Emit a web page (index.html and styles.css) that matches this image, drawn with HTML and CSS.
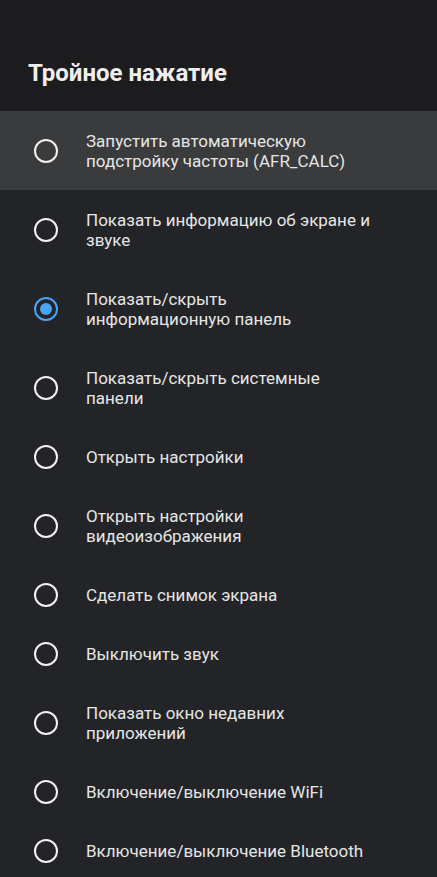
FILE: index.html
```html
<!DOCTYPE html>
<html lang="ru">
<head>
<meta charset="utf-8">
<title>Тройное нажатие</title>
<link rel="stylesheet" href="styles.css">
</head>
<body>
<div class="screen">
  <header class="header">
    <h1 class="title">Тройное нажатие</h1>
  </header>
  <ul class="list">
    <li class="item item--focused"><span class="radio"></span><span class="label">Запустить автоматическую подстройку частоты (AFR_CALC)</span></li>
    <li class="item"><span class="radio"></span><span class="label">Показать информацию об экране и звуке</span></li>
    <li class="item"><span class="radio radio--checked"></span><span class="label">Показать/скрыть информационную панель</span></li>
    <li class="item"><span class="radio"></span><span class="label">Показать/скрыть системные панели</span></li>
    <li class="item"><span class="radio"></span><span class="label">Открыть настройки</span></li>
    <li class="item"><span class="radio"></span><span class="label">Открыть настройки видеоизображения</span></li>
    <li class="item"><span class="radio"></span><span class="label">Сделать снимок экрана</span></li>
    <li class="item"><span class="radio"></span><span class="label">Выключить звук</span></li>
    <li class="item"><span class="radio"></span><span class="label">Показать окно недавних приложений</span></li>
    <li class="item"><span class="radio"></span><span class="label">Включение/выключение WiFi</span></li>
    <li class="item"><span class="radio"></span><span class="label">Включение/выключение Bluetooth</span></li>
  </ul>
</div>
</body>
</html>
```
FILE: styles.css
```css
html, body {
  margin: 0;
  padding: 0;
  background: #232427;
  font-family: Roboto, "Noto Sans", "Liberation Sans", sans-serif;
}
.screen {
  width: 437px;
  height: 877px;
  overflow: hidden;
  background: #232427;
}
.header {
  background: #1c1c1e;
  height: 111px;
  box-sizing: border-box;
  padding: 59px 28px 0;
}
.title {
  margin: 0;
  font-size: 24px;
  line-height: 28px;
  font-weight: 700;
  color: #efefef;
}
.list {
  list-style: none;
  margin: 0;
  padding: 0;
}
.item {
  display: flex;
  align-items: center;
  gap: 28px;
  padding: 19.5px 65px 19.5px 34px;
  color: #e6e6e6;
  font-size: 17px;
  line-height: 20px;
}
.item--focused {
  background: #3a3b3d;
}
.radio {
  flex: none;
  width: 20px;
  height: 20px;
  margin: -2px 0;
  border: 2px solid #f2f2f2;
  border-radius: 50%;
  display: flex;
  align-items: center;
  justify-content: center;
}
.radio--checked {
  border-color: #4aa3f7;
}
.radio--checked::after {
  content: "";
  width: 12px;
  height: 12px;
  border-radius: 50%;
  background: #4aa3f7;
}
.label {
  flex: 1;
}
```
